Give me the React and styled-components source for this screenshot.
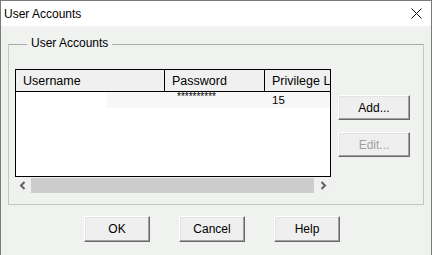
import React from "react";
import styled, { createGlobalStyle } from "styled-components";

const Global = createGlobalStyle`
  html, body { margin: 0; padding: 0; background: #eff2ef; }
  body { font-family: "Liberation Sans", Arial, sans-serif; font-size: 12px; color: #000; }
  * { box-sizing: border-box; }
`;

const Window = styled.div`
  width: 432px;
  height: 255px;
  border: 1px solid #7a7a7a;
  border-bottom: none;
  display: flex;
  flex-direction: column;
  background: #eff2ef;
  overflow: hidden;
`;

const TitleBar = styled.div`
  height: 25px;
  background: #fff;
  display: flex;
  align-items: center;
  justify-content: space-between;
  padding: 0 9px 0 3px;
`;

const Title = styled.span`
  font-size: 12px;
  line-height: 14px;
`;

const Body = styled.div`
  flex: 1;
  padding: 18px 7px 0 7px;
  display: flex;
  flex-direction: column;
`;

const GroupBox = styled.div`
  position: relative;
  height: 161px;
  border: 1px solid #c4c6c4;
  border-top-color: #a9aba9;
  padding: 24px 12px 0 6px;
  display: flex;
  gap: 7px;
`;

const Legend = styled.span`
  position: absolute;
  top: -9px;
  left: 18px;
  padding: 0 4px;
  background: #eff2ef;
  font-size: 12px;
  line-height: 14px;
`;

const ListColumn = styled.div`
  width: 316px;
  display: flex;
  flex-direction: column;
`;

const ListView = styled.div`
  height: 108px;
  border: 1px solid #000;
  background: #fff;
  overflow: hidden;
`;

const Header = styled.div`
  display: grid;
  grid-template-columns: 149px 100px 1fr;
  height: 22px;
  border-bottom: 1px solid #000;
  background: #f0f0f0;
`;

const HeaderCell = styled.div`
  padding: 2px 0 0 7px;
  font-size: 12.5px;
  line-height: 15px;
  display: flex;
  align-items: center;
  white-space: nowrap;
  overflow: hidden;
  border-right: ${(p) => (p.$last ? "none" : "1px solid #000")};
`;

const Row = styled.div`
  display: grid;
  grid-template-columns: 149px 100px 1fr;
  height: 16px;
  background: #f7f7f7;
`;

const Cell = styled.div`
  font-size: ${(p) => p.$size || 11.5}px;
  line-height: ${(p) => p.$lh || 16}px;
  padding-left: ${(p) => p.$pad || 7}px;
  padding-top: ${(p) => p.$top || 0}px;
  white-space: nowrap;
  background: ${(p) => p.$blank ? "linear-gradient(to right, #fff 91px, transparent 91px)" : "transparent"};
`;

const ScrollBar = styled.div`
  margin-top: 1px;
  height: 15px;
  display: flex;
  background: #f0f0f0;
`;

const ScrollBtn = styled.div`
  width: ${(p) => p.$w}px;
  display: flex;
  align-items: center;
  justify-content: center;
  background: #f0f0f0;
`;

const Thumb = styled.div`
  flex: 1;
  background: #cdcdcd;
`;

const SideButtons = styled.div`
  display: flex;
  flex-direction: column;
  gap: 12px;
  padding-top: 26px;
`;

const Button = styled.button`
  width: ${(p) => p.$w}px;
  height: ${(p) => p.$h}px;
  padding: 0;
  font-family: "Liberation Sans", Arial, sans-serif;
  font-size: 12px;
  color: ${(p) => (p.disabled ? "#a0a0a0" : "#000")};
  background: #efefef;
  border: 1px solid;
  border-color: #fff #696969 #696969 #fff;
  box-shadow: inset -1px -1px #a0a0a0, inset 1px 1px #e3e3e3;
`;

const Footer = styled.div`
  display: flex;
  gap: 29px;
  padding: 11px 0 0 76px;
`;

const Chevron = ({ dir }) => (
  <svg width="8" height="9" viewBox="0 0 8 9">
    <path
      d={dir === "left" ? "M5.5 1 L2 4.5 L5.5 8" : "M2.5 1 L6 4.5 L2.5 8"}
      fill="none"
      stroke="#606060"
      strokeWidth="2"
    />
  </svg>
);

const CloseIcon = () => (
  <svg width="11" height="11" viewBox="0 0 11 11">
    <path d="M0.5 0.5 L10.5 10.5 M10.5 0.5 L0.5 10.5" stroke="#111" strokeWidth="1" fill="none" />
  </svg>
);

export default function App() {
  return (
    <>
      <Global />
      <Window>
        <TitleBar>
          <Title>User Accounts</Title>
          <CloseIcon />
        </TitleBar>
        <Body>
          <GroupBox>
            <Legend>User Accounts</Legend>
            <ListColumn>
              <ListView>
                <Header>
                  <HeaderCell>Username</HeaderCell>
                  <HeaderCell>Password</HeaderCell>
                  <HeaderCell $last>Privilege Level</HeaderCell>
                </Header>
                <Row>
                  <Cell $blank></Cell>
                  <Cell $size={10} $lh={10} $pad={12} $top={0}>**********</Cell>
                  <Cell>15</Cell>
                </Row>
              </ListView>
              <ScrollBar>
                <ScrollBtn $w={16}><Chevron dir="left" /></ScrollBtn>
                <Thumb />
                <ScrollBtn $w={17}><Chevron dir="right" /></ScrollBtn>
              </ScrollBar>
            </ListColumn>
            <SideButtons>
              <Button $w={72} $h={25}>Add...</Button>
              <Button $w={72} $h={25} disabled>Edit...</Button>
            </SideButtons>
          </GroupBox>
          <Footer>
            <Button $w={66} $h={26}>OK</Button>
            <Button $w={66} $h={26}>Cancel</Button>
            <Button $w={66} $h={26}>Help</Button>
          </Footer>
        </Body>
      </Window>
    </>
  );
}
